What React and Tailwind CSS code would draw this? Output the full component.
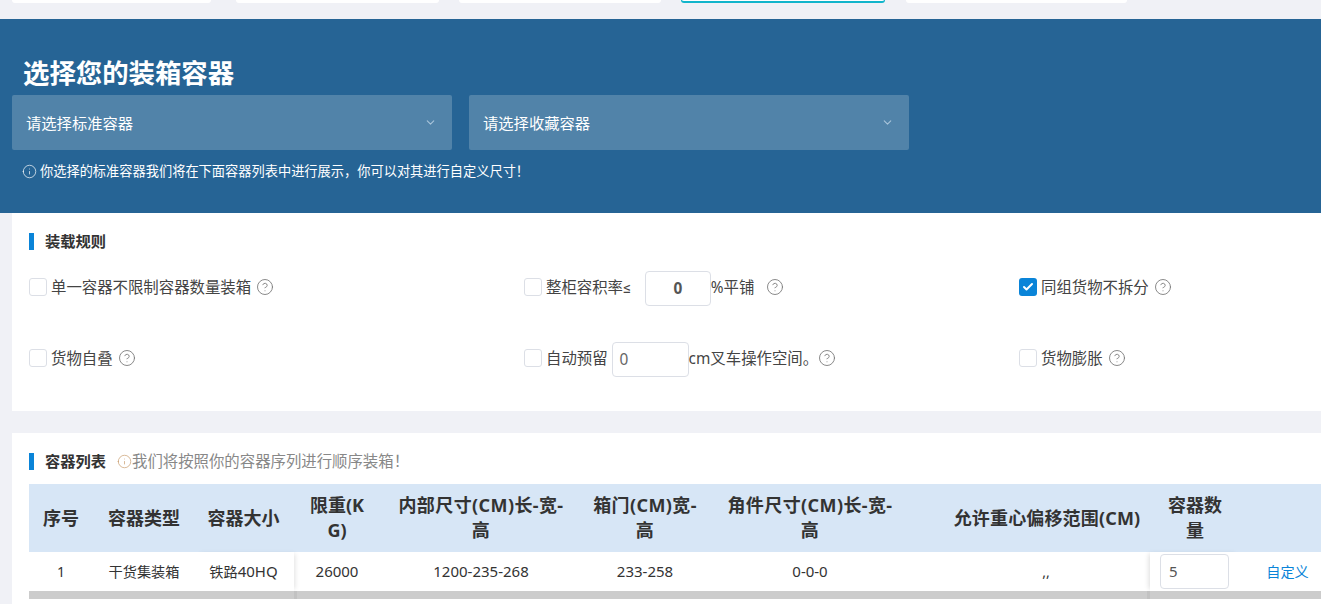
import React from "react";
import { CircleHelp, CircleAlert, ChevronDown, Check } from "lucide-react";

const font = { fontFamily: '"Noto Sans","Noto Sans CJK SC",sans-serif' };

function Help({ className = "" }) {
  return <CircleHelp size={18} strokeWidth={1.15} className={`shrink-0 text-[#777] ${className}`} />;
}

function Box({ checked }) {
  return checked ? (
    <span className="flex h-[18px] w-[18px] shrink-0 items-center justify-center rounded-[3px] bg-[#0a84d8]">
      <Check size={12} strokeWidth={4} className="text-white" />
    </span>
  ) : (
    <span className="h-[18px] w-[18px] shrink-0 rounded-[3px] border border-[#dcdfe6] bg-white" />
  );
}

function Select({ label }) {
  return (
    <div className="flex h-[55px] w-[440px] items-center justify-between rounded-[2px] bg-[#5183a9] pl-[14px] pr-[15px] text-[15.3px] text-white">
      <span className="mt-[2px]">{label}</span>
      <ChevronDown size={13} className="text-[#a9c4da]" />
    </div>
  );
}

function SectionTitle({ children }) {
  return (
    <div className="flex items-center">
      <span className="h-[17px] w-[5px] bg-[#0a84d8]" />
      <span className="ml-[11px] text-[15.25px] font-bold leading-[17px] text-[#333]">{children}</span>
    </div>
  );
}

const heads = [
  ["序号", "w-[64px]"],
  ["容器类型", "w-[102px]"],
  ["容器大小", "w-[99px] pr-[2px] shadow-[3px_0_5px_-2px_rgba(0,0,0,0.12)]"],
  ["限重(KG)", "w-[86px] px-[10px]"],
  ["内部尺寸(CM)长-宽-高", "w-[202px] px-[15px] tracking-[0.4px]"],
  ["箱门(CM)宽-高", "w-[126px] px-[8px] tracking-[0.4px]"],
  ["角件尺寸(CM)长-宽-高", "w-[204px] px-[15px] tracking-[0.4px]"],
  ["允许重心偏移范围(CM)", "w-[238px] pl-[40px] pr-[8px] tracking-[0.15px]"],
  ["容器数量", "w-[90px] px-[10px] shadow-[-3px_0_5px_-2px_rgba(0,0,0,0.14)]"],
  ["", "w-[81px]"],
];

export default function App() {
  return (
    <div style={font} className="h-[604px] w-[1321px] overflow-hidden bg-[#f0f1f6] text-[#444]">
      <div className="flex h-[19px] items-start">
        <div className="ml-[12px] h-[3px] w-[199px] rounded-b-[8px] bg-white" />
        <div className="ml-[25px] h-[3px] w-[203px] rounded-b-[8px] bg-white" />
        <div className="ml-[20px] h-[3px] w-[202px] rounded-b-[8px] bg-white" />
        <div className="ml-[20px] h-[3px] w-[204px] rounded-b-[8px] border-b-2 border-x border-[#12b5cb] bg-white" />
        <div className="ml-[21px] h-[3px] w-[221px] rounded-b-[8px] bg-white" />
      </div>

      <div className="h-[194px] bg-[#266495] text-white">
        <h1 className="pl-[23px] pt-[34px] pb-px text-[26.4px] font-bold leading-[41px]">选择您的装箱容器</h1>
        <div className="ml-[12px] flex gap-[17px]">
          <Select label="请选择标准容器" />
          <Select label="请选择收藏容器" />
        </div>
        <div className="mt-[12px] flex items-center pl-[22px] text-[13.22px] leading-[18px]">
          <CircleAlert size={15} strokeWidth={1.1} className="mr-[3px] rotate-180" />
          <span>你选择的标准容器我们将在下面容器列表中进行展示，你可以对其进行自定义尺寸！</span>
        </div>
      </div>

      <div className="ml-[12px] h-[198px] bg-white pl-[17px] pt-[20px]">
        <SectionTitle>装载规则</SectionTitle>
        <div className="mt-[19px] grid grid-cols-[495px_495px_1fr] auto-rows-[71px] text-[15.4px]">
          <div className="flex h-[36px] items-center">
            <Box />
            <span className="ml-[4px] mt-[2px]">单一容器不限制容器数量装箱</span>
            <Help className="ml-[5px]" />
          </div>
          <div className="flex h-[36px] items-center">
            <Box />
            <span className="ml-[4px] mt-[2px]">整柜容积率<span className="font-['Roboto']">≤</span></span>
            <span className="ml-[14px] mt-[3px] flex h-[35px] w-[66px] items-center justify-center rounded-[4px] border border-[#dcdfe6] font-bold text-[#555]">0</span>
            <span className="mt-[2px]">%平铺</span>
            <Help className="ml-[12px]" />
          </div>
          <div className="flex h-[36px] items-center">
            <Box checked />
            <span className="ml-[4px] mt-[2px]">同组货物不拆分</span>
            <Help className="ml-[5px]" />
          </div>
          <div className="flex h-[36px] items-center">
            <Box />
            <span className="ml-[4px] mt-[2px]">货物自叠</span>
            <Help className="ml-[5px]" />
          </div>
          <div className="flex h-[36px] items-center">
            <Box />
            <span className="ml-[4px] mt-[2px]">自动预留</span>
            <span className="ml-[4px] mt-[3px] flex h-[35px] w-[77px] items-center rounded-[4px] border border-[#dcdfe6] pl-[7px] text-[#666]">0</span>
            <span className="mt-[2px]">cm叉车操作空间。</span>
            <Help />
          </div>
          <div className="flex h-[36px] items-center">
            <Box />
            <span className="ml-[4px] mt-[2px]">货物膨胀</span>
            <Help className="ml-[5px]" />
          </div>
        </div>
      </div>

      <div className="ml-[12px] mt-[22px] h-[171px] bg-white pl-[17px] pt-[20px]">
        <div className="flex items-center">
          <SectionTitle>容器列表</SectionTitle>
          <CircleAlert size={15} strokeWidth={1.1} className="ml-[11px] rotate-180 text-[#c79a6a]" />
          <span className="text-[15.4px] leading-[17px] text-[#888]">我们将按照你的容器序列进行顺序装箱！</span>
        </div>
        <table className="mt-[14px] w-[1292px] table-fixed border-collapse">
          <thead>
            <tr className="h-[68px] bg-[#d7e6f6] text-[18px] leading-[25px] text-[#333]">
              {heads.map(([t, c], i) => (
                <th key={i} className={`relative break-all text-center font-bold ${c}`}>{t}</th>
              ))}
            </tr>
          </thead>
          <tbody>
            <tr className="h-[39px] text-center text-[14.2px] text-[#333]">
              <td>1</td>
              <td>干货集装箱</td>
              <td className="pr-[2px] shadow-[3px_0_5px_-2px_rgba(0,0,0,0.12)]">铁路<span className="text-[15px]">40HQ</span></td>
              <td className="text-[15px]">26000</td>
              <td className="text-[15px]">1200-235-268</td>
              <td className="text-[15px]">233-258</td>
              <td className="text-[15px]">0-0-0</td>
              <td className="pl-[40px] pr-[10px]">,,</td>
              <td className="pl-[10px] shadow-[-3px_0_5px_-2px_rgba(0,0,0,0.14)]">
                <span className="flex h-[35px] w-[69px] items-center rounded-[4px] border border-[#dcdfe6] pl-[8px] text-[15px] text-[#555]">5</span>
              </td>
              <td className="pl-[14px] text-[#0a84d8]">自定义</td>
            </tr>
          </tbody>
        </table>
        <div className="relative h-[8px] w-[1292px] bg-[#cccccc]">
          <span className="absolute left-[265px] top-0 h-[8px] w-[3px] bg-[#c2c2c2]" />
          <span className="absolute left-[1118px] top-0 h-[8px] w-[3px] bg-[#c2c2c2]" />
        </div>
      </div>
    </div>
  );
}
